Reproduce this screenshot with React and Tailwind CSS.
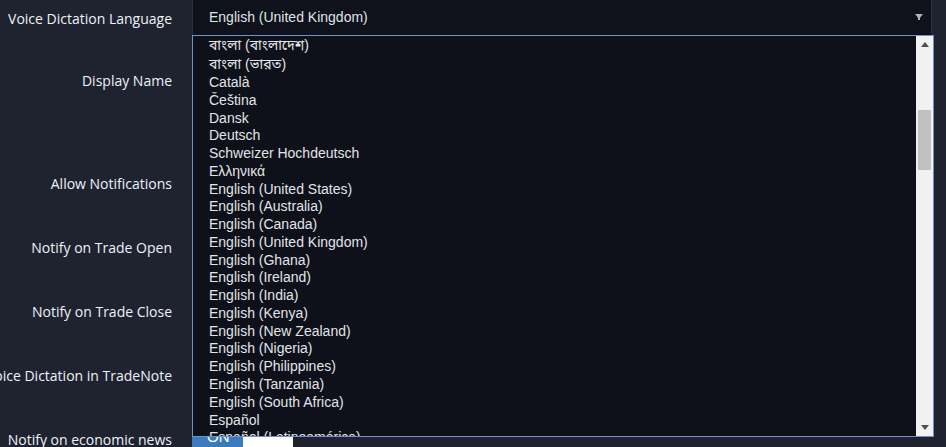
import React from "react";

const items = [
  { t: "বাংলা (বাংলাদেশ)", h: "h-[19px] leading-[19px]" },
  { t: "বাংলা (ভারত)", h: "h-[19px] leading-[19px]" },
  { t: "Català" },
  { t: "Čeština" },
  { t: "Dansk" },
  { t: "Deutsch" },
  { t: "Schweizer Hochdeutsch" },
  { t: "Ελληνικά" },
  { t: "English (United States)" },
  { t: "English (Australia)" },
  { t: "English (Canada)" },
  { t: "English (United Kingdom)" },
  { t: "English (Ghana)" },
  { t: "English (Ireland)" },
  { t: "English (India)" },
  { t: "English (Kenya)" },
  { t: "English (New Zealand)" },
  { t: "English (Nigeria)" },
  { t: "English (Philippines)" },
  { t: "English (Tanzania)" },
  { t: "English (South Africa)" },
  { t: "Español" },
  { t: "Español (Latinoamérica)" },
];

const labelCls =
  "flex items-center justify-end pr-[20px] text-[14px] text-[#eef1f5] whitespace-nowrap";

export default function App() {
  return (
    <div
      className="relative w-[946px] h-[447px] overflow-hidden bg-[#1f2330]"
      style={{ fontFamily: '"Open Sans", sans-serif' }}
    >
      <div className="flex">
        {/* label column */}
        <div className="w-[192px] shrink-0 flex flex-col -mt-[1px]">
          <div className={labelCls + " h-[38px]"}>Voice Dictation Language</div>
          <div className={labelCls + " h-[64px] mt-[11px]"}>Display Name</div>
          <div className={labelCls + " h-[64px] mt-[39px]"}>Allow Notifications</div>
          <div className={labelCls + " h-[64px]"}>Notify on Trade Open</div>
          <div className={labelCls + " h-[64px]"}>Notify on Trade Close</div>
          <div className={labelCls + " h-[64px]"}>Voice Dictation in TradeNote</div>
          <div className={labelCls + " h-[64px]"}>Notify on economic news</div>
        </div>
        {/* control column */}
        <div className="flex flex-col w-[740px]">
          <div
            className="h-[35px] flex items-center justify-between bg-[#0f121a] border-l border-r border-[#2c303b] pl-[16px] pr-[6px] text-[14px] text-[#dfe2e6]"
            style={{ fontFamily: '"Liberation Sans", Arial, sans-serif' }}
          >
            <span>English (United Kingdom)</span>
            <svg width="8" height="7" viewBox="0 0 8 7" className="mr-[2px]">
              <polygon points="0,0 8,0 4,5" fill="#b4b4b4" />
              <rect x="3" y="4" width="2" height="2" fill="#b4b4b4" />
            </svg>
          </div>
          <div className="h-[365px]" />
          <div className="h-[20px] flex mt-[27px]">
            <div
              className="w-[51px] bg-[#3a7bbd] text-white text-[15px] flex items-center pl-[15px]"
              style={{ fontFamily: '"Liberation Sans", Arial, sans-serif' }}
            >
              ON
            </div>
            <div className="w-[50px] bg-white" />
          </div>
        </div>
      </div>

      {/* open dropdown list */}
      <div
        className="absolute left-[192px] top-[35px] w-[742px] h-[402px] border border-[#6f93c9] bg-[#0e1119] flex"
        style={{ fontFamily: '"Liberation Sans", Arial, "Noto Sans Bengali", "Noto Sans", sans-serif' }}
      >
        <div className="flex-1 overflow-hidden">
          <div>
            {items.map((it, i) => (
              <div
                key={i}
                className={
                  "pl-[16px] text-[14px] text-[#e2e4e8] whitespace-nowrap " +
                  (it.h || "h-[17.77px] leading-[17.77px]")
                }
              >
                {it.t}
              </div>
            ))}
          </div>
        </div>
        <div className="w-[17px] shrink-0 bg-[#f1f1f1] flex flex-col items-center">
          <div className="h-[17px] w-full flex items-center justify-center">
            <svg width="8" height="5" viewBox="0 0 8 5">
              <polygon points="0,5 8,5 4,0" fill="#505050" />
            </svg>
          </div>
          <div className="mt-[57px] w-[13px] h-[60px] bg-[#c1c1c1]" />
          <div className="flex-1" />
          <div className="h-[17px] w-full flex items-center justify-center">
            <svg width="8" height="5" viewBox="0 0 8 5">
              <polygon points="0,0 8,0 4,5" fill="#505050" />
            </svg>
          </div>
        </div>
      </div>
    </div>
  );
}
